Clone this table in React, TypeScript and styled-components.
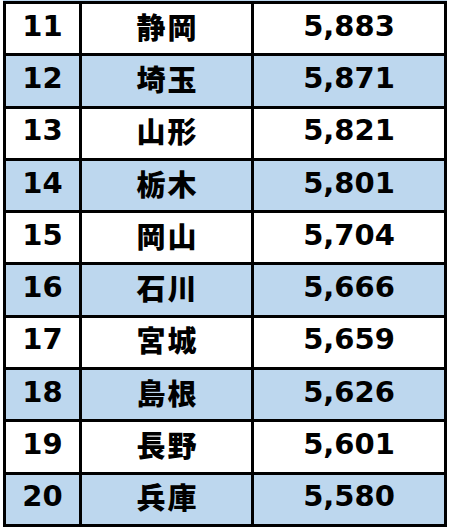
import styled, { createGlobalStyle } from "styled-components"

const GlobalStyle = createGlobalStyle`
    html, body {
        margin: 0;
        padding: 0;
        background: #ffffff;
    }
    body {
        width: 450px;
        height: 530px;
        overflow: hidden;
        font-family: "DejaVu Sans", Verdana, "Noto Sans CJK JP", sans-serif;
    }
`

const Page = styled.div`
    padding-left: 3px;
    width: 444px;
`

// the bottom edge of rank 10, cut off by the top of the shot
const TopStrip = styled.div`
    height: 1px;
    background: #bdd7ee;
`

const Grid = styled.div`
    display: grid;
    grid-template-columns: 73px 169px 190px;
    grid-auto-rows: 49.3px;
    gap: 3px;
    padding: 3px;
    background: #000000;
`

const Cell = styled.div<{ $shaded: boolean }>`
    display: flex;
    align-items: center;
    justify-content: center;
    padding-bottom: 5px;
    box-sizing: border-box;
    background: ${p => (p.$shaded ? "#bdd7ee" : "#ffffff")};
    color: #000000;
    font-weight: bold;
    font-size: 29px;
    line-height: 1;
`

const Pref = styled(Cell)`
    font-family: "Noto Sans CJK JP", sans-serif;
    font-weight: 900;
    font-size: 29px;
    letter-spacing: 2px;
    padding-left: 2px;
`

const rows = [
    { rank: 11, pref: "静岡", value: "5,883" },
    { rank: 12, pref: "埼玉", value: "5,871" },
    { rank: 13, pref: "山形", value: "5,821" },
    { rank: 14, pref: "栃木", value: "5,801" },
    { rank: 15, pref: "岡山", value: "5,704" },
    { rank: 16, pref: "石川", value: "5,666" },
    { rank: 17, pref: "宮城", value: "5,659" },
    { rank: 18, pref: "島根", value: "5,626" },
    { rank: 19, pref: "長野", value: "5,601" },
    { rank: 20, pref: "兵庫", value: "5,580" },
]

function App() {
    return (
        <Page>
            <GlobalStyle />
            <TopStrip />
            <Grid>
                {rows.map((r, i) => {
                    const shaded = i % 2 === 1
                    return [
                        <Cell key={r.rank + "a"} $shaded={shaded}>{r.rank}</Cell>,
                        <Pref key={r.rank + "b"} $shaded={shaded}>{r.pref}</Pref>,
                        <Cell key={r.rank + "c"} $shaded={shaded}>{r.value}</Cell>,
                    ]
                })}
            </Grid>
        </Page>
    )
}

export default App
